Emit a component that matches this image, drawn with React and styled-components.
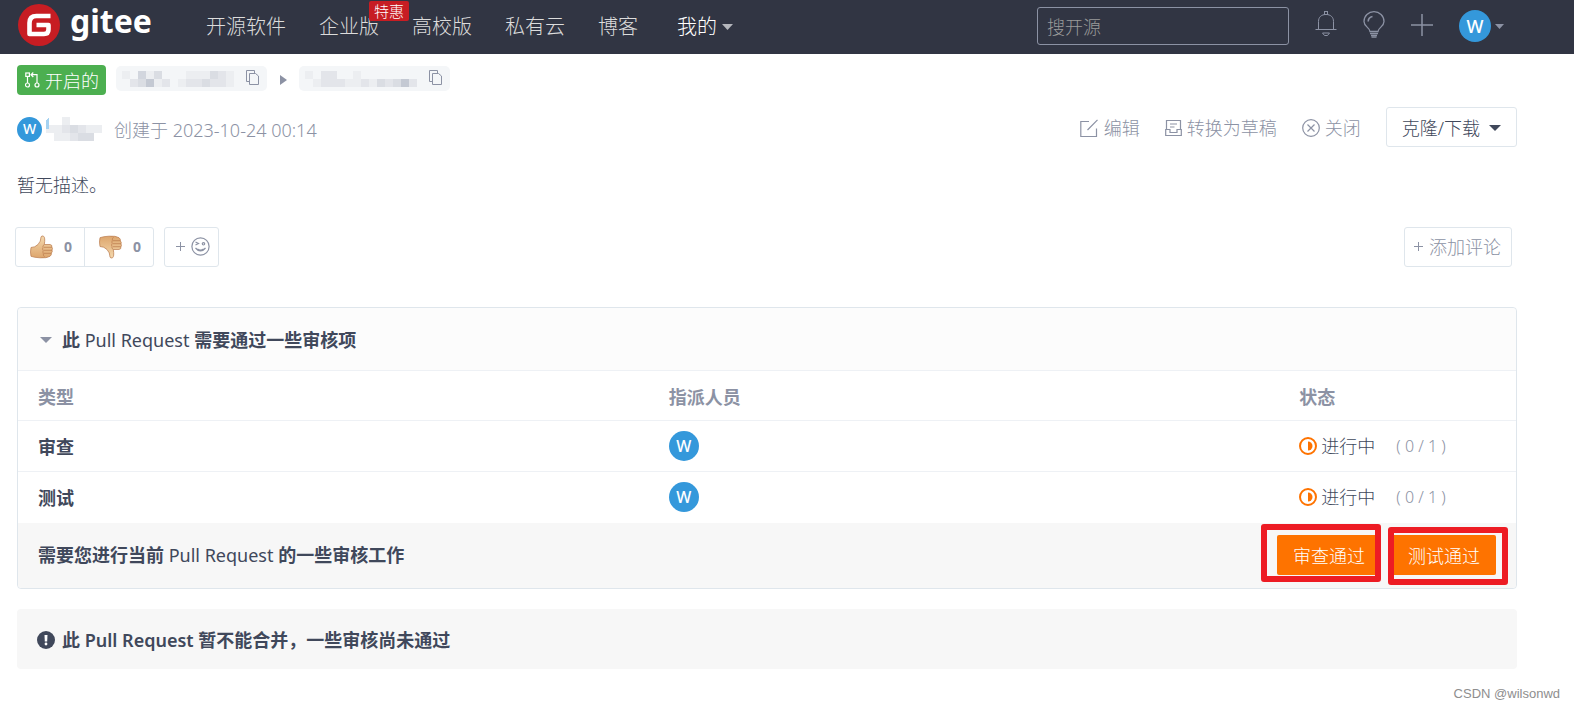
import React from "react";
import styled, { createGlobalStyle, css } from "styled-components";

const color = {
  ink: "#40485b",
  muted: "#8c92a4",
  line: "#dfe6ec",
  softLine: "#eef1f5",
  orange: "#fe7300",
  blue: "#3498db",
  green: "#4caf50",
  red: "#c71d23",
  mark: "#ed1c24",
  header: "#313543",
};

const GlobalStyle = createGlobalStyle`
  *, *::before, *::after { box-sizing: border-box; }
  body {
    margin: 0;
    background: #fff;
    color: ${color.ink};
    font-family: "Noto Sans", "Noto Sans CJK SC", sans-serif;
    font-size: 18px;
    font-weight: 300;
    line-height: 28px;
  }
  button, input { font: inherit; color: inherit; }
  button { cursor: pointer; white-space: nowrap; }
  a { color: inherit; text-decoration: none; }
  svg { display: block; flex: none; }
`;

/* ---------- header ---------- */

const Header = styled.header`
  display: flex;
  align-items: center;
  height: 54px;
  padding: 0 70px 0 18px;
  background: ${color.header};
  color: #dcdcdc;
`;

const Brand = styled.a`
  display: flex;
  align-items: center;
  gap: 10px;
  height: 46px;
  margin-bottom: 4px;
  width: 188px;
  color: #fff;
`;

const Wordmark = styled.span`
  font-family: "Noto Sans", sans-serif;
  font-size: 32px;
  font-weight: 700;
  line-height: 46px;
  padding-bottom: 8px;
`;

const Nav = styled.nav`
  display: flex;
  align-items: center;
  gap: 33px;
  font-size: 20px;
  white-space: nowrap;
`;

const NavItem = styled.a`
  position: relative;
`;

const NavMenu = styled.button`
  display: flex;
  align-items: center;
  gap: 5px;
  margin-left: 6px;
  padding: 0;
  border: 0;
  background: none;
  color: #fff;
`;

const Promo = styled.span`
  position: absolute;
  top: -12px;
  right: -30px;
  padding: 0 5px;
  border-radius: 2px;
  background: ${color.red};
  color: #fff;
  font-size: 15px;
  line-height: 20px;
`;

const Tools = styled.div`
  display: flex;
  align-items: center;
  gap: 26px;
  margin-left: auto;
  padding-bottom: 2px;
`;

const Search = styled.input`
  width: 252px;
  height: 38px;
  padding: 2px 9px 0;
  border: 1px solid ${color.muted};
  border-radius: 3px;
  background: transparent;
  &::placeholder { color: #9a9a9a; opacity: 1; }
`;

const IconButton = styled.button`
  display: flex;
  align-items: center;
  gap: 4px;
  padding: 0;
  border: 0;
  background: none;
  color: ${color.muted};
`;

const Avatar = styled.span`
  display: flex;
  align-items: center;
  justify-content: center;
  width: ${(p) => p.$size}px;
  height: ${(p) => p.$size}px;
  border-radius: 50%;
  background: ${color.blue};
  color: #fff;
  font-size: ${(p) => p.$text}px;
  font-weight: 500;
  line-height: 1;
`;

/* ---------- pull request summary ---------- */

const Page = styled.main`
  padding: 11px 57px 0 17px;
`;

const BranchRow = styled.div`
  display: flex;
  align-items: center;
  height: 30px;
`;

const StateTag = styled.span`
  display: flex;
  align-items: center;
  gap: 5px;
  height: 30px;
  padding: 2px 7px 0 8px;
  border-radius: 4px;
  background: ${color.green};
  color: #fff;
  margin-right: 10px;
`;

const Branch = styled.span`
  display: flex;
  align-items: center;
  justify-content: space-between;
  width: 151px;
  height: 25px;
  padding: 0 8px 0 6px;
  border-radius: 5px;
  background: #f4f6f8;
  margin-bottom: 3px;
`;

const Arrow = styled.span`
  padding: 0 12px 0 13px;
`;

const MetaRow = styled.div`
  display: flex;
  justify-content: space-between;
  align-items: center;
  height: 40px;
  margin-top: 12px;
  color: ${color.muted};
`;

const Author = styled.div`
  display: flex;
  align-items: center;
  gap: 4px;
  padding-top: 4px;
`;

const Created = styled.time`
  padding: 2px 0 0 8px;
`;

const Actions = styled.div`
  display: flex;
  align-items: center;
  gap: 25px;
`;

const TextAction = styled.button`
  display: flex;
  align-items: center;
  gap: 5px;
  padding: 2px 0 0;
  border: 0;
  background: none;
`;

const outlined = css`
  display: flex;
  align-items: center;
  height: 40px;
  border: 1px solid ${color.line};
  border-radius: 3px;
  background: #fff;
`;

const CloneButton = styled.button`
  ${outlined}
  gap: 9px;
  padding: 2px 15px 0;
  color: ${color.ink};
`;

const Description = styled.p`
  margin: 24px 0 28px;
`;

const ReactionRow = styled.div`
  display: flex;
  align-items: center;
  gap: 10px;
  margin: 0 5px 0 -2px;
  color: ${color.muted};
`;

const ReactionGroup = styled.div`
  ${outlined}
`;

const Reaction = styled.button`
  box-sizing: content-box;
  display: flex;
  align-items: center;
  gap: 11px;
  height: 38px;
  width: 54px;
  padding: 0 0 0 14px;
  border: 0;
  background: none;
  font-size: 14px;
  font-weight: 700;
  & + & { border-left: 1px solid ${color.line}; }
`;

const EmojiButton = styled.button`
  ${outlined}
  gap: 6px;
  width: 55px;
  padding: 0 0 0 11px;
`;

const CommentButton = styled.button`
  ${outlined}
  gap: 6px;
  margin-left: auto;
  padding: 0 10px 0 9px;
`;

/* ---------- checks panel ---------- */

const Panel = styled.section`
  margin-top: 40px;
  border: 1px solid ${color.line};
  border-radius: 4px;
`;

const PanelTitle = styled.h2`
  display: flex;
  align-items: center;
  height: 62px;
  margin: 0;
  padding: 2px 22px 0;
  background: #fcfcfc;
  border-radius: 4px 4px 0 0;
  font-size: 18px;
  font-weight: 700;
`;

const Toggle = styled.button`
  display: flex;
  align-items: center;
  gap: 10px;
  padding: 0;
  border: 0;
  background: none;
`;

const Latin = styled.span`
  font-weight: ${(p) => p.$weight};
`;

const Checks = styled.table`
  width: 100%;
  padding-bottom: 1px;
  border-collapse: separate;
  border-spacing: 0;
  table-layout: fixed;
`;

const cell = css`
  width: ${(p) => p.$width};
  height: ${(p) => p.$height || 51}px;
  padding: 2px 20px 0;
  border-top: 1px solid ${color.softLine};
  text-align: left;
  vertical-align: middle;
  font-weight: 700;
`;

const HeadCell = styled.th`
  ${cell}
  color: ${color.muted};
`;

const NameCell = styled.th`
  ${cell}
`;

const Cell = styled.td`
  ${cell}
  padding-top: 0;
  font-weight: 300;
`;

const Status = styled.span`
  display: flex;
  align-items: center;
  gap: 4px;
  white-space: nowrap;
`;

const Count = styled.span`
  padding-left: 17px;
  color: ${color.muted};
  font-size: 16px;
`;

const PanelFooter = styled.div`
  display: flex;
  align-items: center;
  justify-content: space-between;
  height: 65px;
  padding: 0 20px 1px;
  background: #f7f7f7;
  border-radius: 0 0 4px 4px;
  font-weight: 700;
`;

const Approvals = styled.div`
  display: flex;
  gap: 11px;
`;

const Approve = styled.div`
  position: relative;
`;

const ApproveButton = styled.button`
  height: 40px;
  padding: 2px 16px 0;
  border: 0;
  border-radius: 2px;
  background: ${color.orange};
  color: #fff;
  font-weight: 300;
`;

const Highlight = styled.span`
  position: absolute;
  top: ${(p) => p.$top}px;
  right: ${(p) => p.$right}px;
  width: 120px;
  height: 58px;
  border: 6px solid ${color.mark};
  border-radius: 3px;
  pointer-events: none;
`;

const Notice = styled.p`
  display: flex;
  align-items: center;
  gap: 7px;
  height: 60px;
  margin: 20px 0 0;
  padding: 2px 20px 0;
  border-radius: 4px;
  background: #f7f7f7;
  font-weight: 700;
`;

const Credit = styled.footer`
  padding: 16px 14px 0 0;
  text-align: right;
  color: #8e8e8e;
  font-family: "Liberation Sans", sans-serif;
  font-size: 13px;
  font-weight: 400;
  line-height: 18px;
`;

/* ---------- drawings ---------- */

const Caret = ({ w = 12, h = 6, fill = "currentColor" }) => (
  <svg width={w} height={h} viewBox="0 0 12 6" preserveAspectRatio="none" aria-hidden="true">
    <path d="M0 0H12L6 6Z" fill={fill} />
  </svg>
);

const Logo = () => (
  <svg width="42" height="42" viewBox="0 0 42 42" aria-hidden="true">
    <circle cx="21" cy="21" r="21" fill={color.red} />
    <path
      d="M32.5 12H18.5Q11.5 12 11.5 19V30H26Q30.500 30 30.500 25.500V21H18.500"
      fill="none"
      stroke="#fff"
      strokeWidth="4.600"
      strokeLinejoin="round"
    />
  </svg>
);

const Bell = () => (
  <svg width="22" height="30" viewBox="0 0 22 30" fill="none" stroke="currentColor" aria-hidden="true">
    <path d="M0.500 18.500H21.500M3.500 18.500V10.500C3.500 6 6.500 3.500 11 3.500S18.500 6 18.500 10.500V18.500" />
    <rect x="9.500" y="0.500" width="3" height="3" />
    <path d="M7.500 22H14.500L12.500 24.500H9.500Z" />
  </svg>
);

const Bulb = () => (
  <svg width="22" height="30" viewBox="0 0 22 30" fill="none" stroke="currentColor" strokeWidth="1.300" aria-hidden="true">
    <path d="M7 20.500C7 16.500 1 16 1 10.500A10 9.800 0 0 1 21 10.500C21 16 15 16.500 15 20.500Z" />
    <path d="M5.200 10.500C5.200 8 7 6 9.500 5.500" strokeWidth="1.600" />
    <path d="M7 22.500H15M8 24.500H14M8.500 26.200H13.500" />
  </svg>
);

const Plus = ({ size = 22 }) => (
  <svg width={size} height={size + 2} viewBox={`0 0 ${size} ${size + 2}`} stroke="currentColor" aria-hidden="true">
    <path d={`M0 ${size / 2}H${size}M${size / 2} 0V${size}`} strokeWidth={size > 12 ? 1.5 : 1} />
  </svg>
);

const PullIcon = () => (
  <svg width="15" height="18" viewBox="0 0 15 18" fill="none" stroke="currentColor" strokeWidth="1.200" aria-hidden="true">
    <rect x="0.800" y="1" width="3.600" height="3.400" />
    <circle cx="2.500" cy="13" r="2" />
    <circle cx="12" cy="13" r="2" />
    <path d="M2.500 4.500V11M12 11V2.700H6M8.300 0.500L6 2.700L8.300 5" />
  </svg>
);

const Copy = () => (
  <svg width="13" height="18" viewBox="0 0 13 18" fill="none" stroke={color.muted} aria-hidden="true">
    <path d="M3 11.500H0.500V0.500H8.500V3" />
    <path d="M3.500 3.500H9.500L12.500 6V14.500H3.500Z" />
  </svg>
);

const EditIcon = () => (
  <svg width="19" height="19" viewBox="0 0 19 19" fill="none" stroke="currentColor" strokeWidth="1.200" aria-hidden="true">
    <path d="M9 2.500H0.800V17.500H16.500V9.500M7.500 11L17.500 0.800" />
  </svg>
);

const DraftIcon = () => (
  <svg width="17" height="19" viewBox="0 0 17 19" fill="none" stroke="currentColor" strokeWidth="1.200" aria-hidden="true">
    <path d="M1.500 10V1.500H15.500V10M5 5H12M5 8H9.500" />
    <path d="M0.700 10.500H5V13.500H12V10.500H16.300V16.500H0.700Z" />
  </svg>
);

const CloseIcon = () => (
  <svg width="18" height="18" viewBox="0 0 18 18" fill="none" stroke="currentColor" strokeWidth="1.200" aria-hidden="true">
    <circle cx="9" cy="9" r="8.300" />
    <path d="M5.500 5.500L12.500 12.500M12.500 5.500L5.500 12.500" />
  </svg>
);

const Smile = () => (
  <svg width="19" height="21" viewBox="0 0 19 21" fill="none" stroke="currentColor" strokeWidth="1.200" aria-hidden="true">
    <circle cx="9.500" cy="9.500" r="8.600" />
    <path d="M4.500 11Q9.500 17 14.500 11M6.500 12Q9.500 14 12.500 12M4.500 5L7.500 6.500L4.500 8" />
    <circle cx="12.500" cy="6.800" r="1.200" />
  </svg>
);

const Thumb = ({ down }) => (
  <svg width="23" height="24" viewBox="0 0 23 24" aria-hidden="true">
    <defs>
      <linearGradient id={down ? "skinDown" : "skinUp"} x1="0" y1="0" x2="0" y2="1">
        <stop offset="0" stopColor="#f4d9ae" />
        <stop offset="1" stopColor="#dda56c" />
      </linearGradient>
    </defs>
    <g transform={down ? "translate(0 24) scale(1 -1)" : undefined} stroke="#b9794a" strokeWidth="0.700">
      <path
        d="M1 12.500Q5 12.500 8 9.500Q11 6.500 11 2Q11.500 0.300 13.500 1.200Q15.500 2.500 14.300 9.500H20Q22.500 10 21.800 12Q23 13.500 22 15Q22.800 17 21.300 18Q21.800 20 20 21.300Q17 23.300 10 22.800Q4 22.500 1 21.300Q0 17 1 12.500Z"
        fill={`url(#${down ? "skinDown" : "skinUp"})`}
      />
      <path d="M21.800 12.300H14M22 15.300H14M21.300 18.300H14M14.300 9.500Q12.300 10.500 13 12.500Q12 14 13.200 15.500Q12.500 17 13.300 18.500Q13 20.500 14.500 21.800" fill="none" />
    </g>
  </svg>
);

const HalfIcon = () => (
  <svg width="18" height="18" viewBox="0 0 18 18" aria-hidden="true">
    <circle cx="9" cy="9" r="8" fill="none" stroke={color.orange} strokeWidth="2" />
    <path d="M9 4.500A4.500 4.500 0 0 1 9 13.500Z" fill={color.orange} />
  </svg>
);

const AlertIcon = () => (
  <svg width="18" height="18" viewBox="0 0 18 18" aria-hidden="true">
    <circle cx="9" cy="9" r="9" fill={color.ink} />
    <path d="M7.500 4H10.500L10.200 10.500H7.800Z" fill="#fff" />
    <circle cx="9" cy="13" r="1.400" fill="#fff" />
  </svg>
);

/* Pixelated stand-in for a private name; each digit picks a shade. */
const shades = ["none", "#eceef1", "#e3e5ea", "#dadde3", "#d2d6de", "#c4c9d3"];

const Mosaic = ({ rows, first }) => (
  <svg width={rows[0].length * 8} height={rows.length * 8} aria-hidden="true" shapeRendering="crispEdges">
    {rows.map((row, y) =>
      [...row].map((n, x) => (
        <rect key={`${x}-${y}`} x={x * 8} y={y * 8} width="8" height="8" fill={shades[n]} />
      ))
    )}
    {first && <path d="M0 4L3 0V12H0Z" fill="#a5d2f1" />}
  </svg>
);

const sourceBranch = ["10413000111321", "02351201223221"];
const targetBranch = ["10220010000000", "01222112132352"];
const authorName = ["0010000", "1123211", "0112330"];

const checks = ["审查", "测试"];

const UserAvatar = ({ size, text }) => (
  <Avatar $size={size} $text={text}>W</Avatar>
);

export default function App() {
  return (
    <>
      <GlobalStyle />
      <Header>
        <Brand href="#">
          <Logo />
          <Wordmark>gitee</Wordmark>
        </Brand>
        <Nav>
          <NavItem href="#">开源软件</NavItem>
          <NavItem href="#">
            企业版<Promo>特惠</Promo>
          </NavItem>
          <NavItem href="#">高校版</NavItem>
          <NavItem href="#">私有云</NavItem>
          <NavItem href="#">博客</NavItem>
          <NavMenu type="button">
            我的
            <Caret w={11} fill="#b5b7bd" />
          </NavMenu>
        </Nav>
        <Tools>
          <Search type="search" placeholder="搜开源" aria-label="搜开源" />
          <IconButton type="button" aria-label="通知"><Bell /></IconButton>
          <IconButton type="button" aria-label="动态"><Bulb /></IconButton>
          <IconButton type="button" aria-label="新建"><Plus /></IconButton>
          <IconButton type="button" aria-label="用户菜单">
            <UserAvatar size={32} text={18} />
            <Caret w={9} h={5} />
          </IconButton>
        </Tools>
      </Header>

      <Page>
        <BranchRow>
          <StateTag>
            <PullIcon />
            开启的
          </StateTag>
          <Branch>
            <Mosaic rows={sourceBranch} />
            <IconButton type="button" aria-label="复制"><Copy /></IconButton>
          </Branch>
          <Arrow>
            <svg width="7" height="10" viewBox="0 0 7 10" aria-hidden="true">
              <path d="M0 0L7 5L0 10Z" fill={color.muted} />
            </svg>
          </Arrow>
          <Branch>
            <Mosaic rows={targetBranch} />
            <IconButton type="button" aria-label="复制"><Copy /></IconButton>
          </Branch>
        </BranchRow>

        <MetaRow>
          <Author>
            <UserAvatar size={25} text={14} />
            <Mosaic rows={authorName} first />
            <Created>创建于 2023-10-24 00:14</Created>
          </Author>
          <Actions>
            <TextAction type="button"><EditIcon />编辑</TextAction>
            <TextAction type="button"><DraftIcon />转换为草稿</TextAction>
            <TextAction type="button"><CloseIcon />关闭</TextAction>
            <CloneButton type="button">克隆/下载<Caret /></CloneButton>
          </Actions>
        </MetaRow>

        <Description>暂无描述。</Description>

        <ReactionRow>
          <ReactionGroup>
            <Reaction type="button"><Thumb />0</Reaction>
            <Reaction type="button"><Thumb down />0</Reaction>
          </ReactionGroup>
          <EmojiButton type="button" aria-label="添加表情">
            <Plus size={9} />
            <Smile />
          </EmojiButton>
          <CommentButton type="button">
            <Plus size={9} />
            添加评论
          </CommentButton>
        </ReactionRow>

        <Panel>
          <PanelTitle>
            <Toggle type="button">
              <Caret fill={color.muted} />
              <span>此 <Latin $weight={400}>Pull Request</Latin> 需要通过一些审核项</span>
            </Toggle>
          </PanelTitle>
          <Checks>
            <thead>
              <tr>
                <HeadCell $width="42.1%" $height={50}>类型</HeadCell>
                <HeadCell $width="42.1%" $height={50}>指派人员</HeadCell>
                <HeadCell $width="15.8%" $height={50}>状态</HeadCell>
              </tr>
            </thead>
            <tbody>
              {checks.map((name) => (
                <tr key={name}>
                  <NameCell scope="row">{name}</NameCell>
                  <Cell><UserAvatar size={30} text={16} /></Cell>
                  <Cell>
                    <Status>
                      <HalfIcon />
                      进行中
                      <Count>( 0 / 1 )</Count>
                    </Status>
                  </Cell>
                </tr>
              ))}
            </tbody>
          </Checks>
          <PanelFooter>
            <span>需要您进行当前 <Latin $weight={400}>Pull Request</Latin> 的一些审核工作</span>
            <Approvals>
              <Approve>
                <ApproveButton type="button">审查通过</ApproveButton>
                <Highlight $top={-11} $right={0} />
              </Approve>
              <Approve>
                <ApproveButton type="button">测试通过</ApproveButton>
                <Highlight $top={-8} $right={-12} />
              </Approve>
            </Approvals>
          </PanelFooter>
        </Panel>

        <Notice>
          <AlertIcon />
          <span>此 <Latin $weight={600}>Pull Request</Latin> 暂不能合并，一些审核尚未通过</span>
        </Notice>
      </Page>
      <Credit>CSDN @wilsonwd</Credit>
    </>
  );
}
